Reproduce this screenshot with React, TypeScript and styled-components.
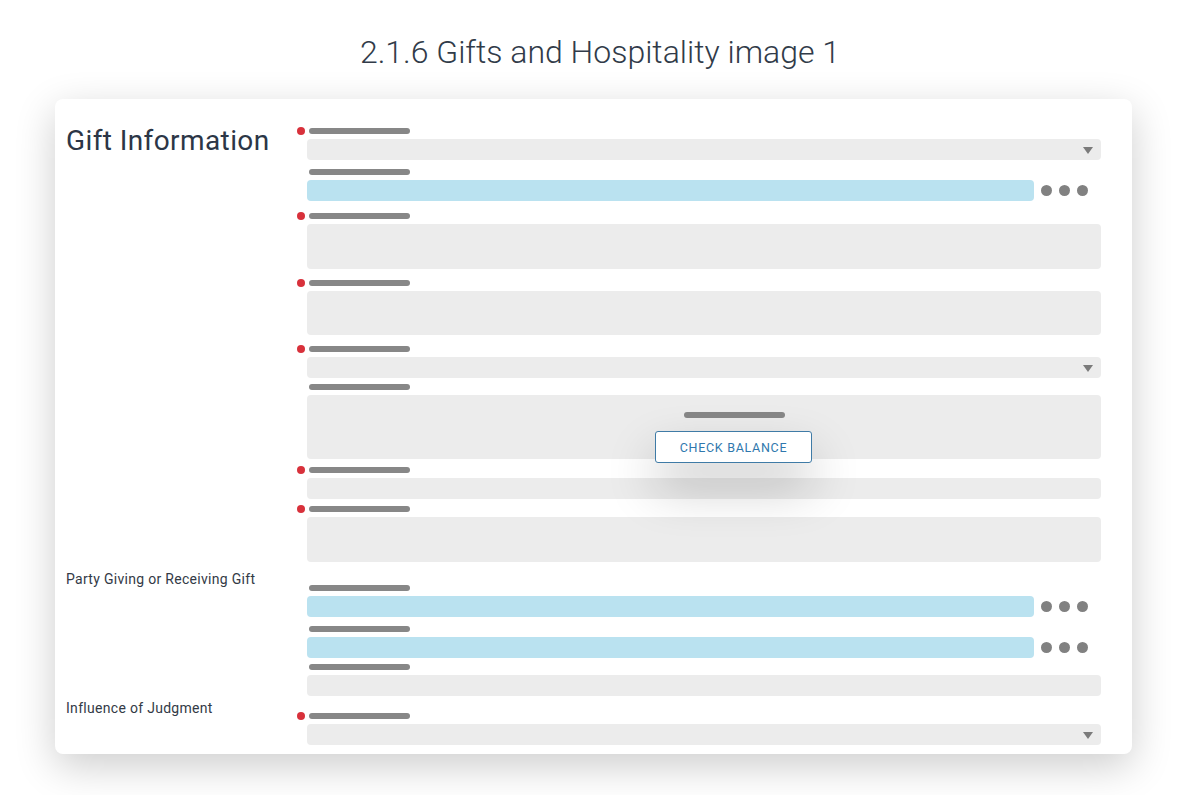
import React from 'react';
import styled, { createGlobalStyle } from 'styled-components';

type Kind = 'select' | 'blue' | 'plain';

interface FieldDef {
    kind: Kind;
    h: number;
    gap: number;
    required?: boolean;
    overlay?: boolean;
}

interface SectionDef {
    title: string;
    big?: boolean;
    top: number;
    offset: number;
    fields: Array<FieldDef>;
}

const GlobalStyle = createGlobalStyle`
    body {
        margin: 0;
        background: #ffffff;
        font-family: Roboto, "Liberation Sans", sans-serif;
    }
`

const Page = styled.div`
    width: 1200px;
    height: 795px;
    overflow: hidden;
`

const Title = styled.h1`
    margin: 0;
    padding-top: 33px;
    font-size: 32px;
    line-height: 38px;
    font-weight: 300;
    color: #313b49;
    text-align: center;
`

const Card = styled.div`
    margin: 28px 0 0 55px;
    width: 1077px;
    box-sizing: border-box;
    padding: 25px 31px 9px 11px;
    background: #ffffff;
    border-radius: 8px;
    box-shadow: 0 12px 40px rgba(0, 0, 0, 0.2);
`

const Section = styled.div<{ $top: number }>`
    display: grid;
    grid-template-columns: 241px 1fr;
    align-items: start;
    margin-top: ${p => p.$top}px;
`

const Heading = styled.div<{ $big?: boolean }>`
    font-size: ${p => (p.$big ? '28px' : '14px')};
    line-height: ${p => (p.$big ? '33px' : '16px')};
    letter-spacing: ${p => (p.$big ? '0.4px' : '0.3px')};
    font-weight: 400;
    color: ${p => (p.$big ? '#2c3646' : '#333a46')};
`

const Fields = styled.div<{ $offset: number }>`
    display: flex;
    flex-direction: column;
    padding-top: ${p => p.$offset}px;
`

const Field = styled.div<{ $gap: number }>`
    display: flex;
    flex-direction: column;
    gap: 5px;
    margin-top: ${p => p.$gap}px;
`

const LabelRow = styled.div`
    position: relative;
    height: 6px;
`

const LabelBar = styled.div`
    margin-left: 2px;
    width: 101px;
    height: 6px;
    border-radius: 3px;
    background: #878787;
`

const RequiredDot = styled.span`
    position: absolute;
    left: -10px;
    top: -1px;
    width: 8px;
    height: 8px;
    border-radius: 50%;
    background: #d8313b;
`

const InputRow = styled.div`
    display: flex;
    align-items: center;
`

const Box = styled.div<{ $h: number; $blue?: boolean }>`
    position: relative;
    flex: 1;
    height: ${p => p.$h}px;
    border-radius: 4px;
    background: ${p => (p.$blue ? '#bae2f0' : '#ececec')};
`

const Arrow = styled.span`
    position: absolute;
    right: 8px;
    top: 50%;
    margin-top: -3px;
    width: 0;
    height: 0;
    border-left: 5px solid transparent;
    border-right: 5px solid transparent;
    border-top: 7px solid #7b7b7b;
`

const Dots = styled.div`
    display: flex;
    gap: 7px;
    width: 67px;
    box-sizing: border-box;
    padding-left: 7px;
`

const Dot = styled.span`
    width: 11px;
    height: 11px;
    border-radius: 50%;
    background: #818181;
`

const Overlay = styled.div`
    position: absolute;
    left: 348px;
    top: 17px;
    display: flex;
    flex-direction: column;
    align-items: center;
    gap: 13px;
    z-index: 2;
`

const CheckButton = styled.button`
    width: 157px;
    height: 32px;
    padding: 0;
    background: #ffffff;
    border: 1px solid #3f7ba6;
    border-radius: 3px;
    font-family: Roboto, "Liberation Sans", sans-serif;
    font-size: 12.5px;
    letter-spacing: 0.7px;
    color: #2f78ad;
    box-shadow: 0 24px 50px rgba(0, 0, 0, 0.24);
`

const sections: Array<SectionDef> = [
    {
        title: 'Gift Information',
        big: true,
        top: 0,
        offset: 4,
        fields: [
            { kind: 'select', h: 21, gap: 0, required: true },
            { kind: 'blue', h: 21, gap: 9 },
            { kind: 'plain', h: 45, gap: 12, required: true },
            { kind: 'plain', h: 44, gap: 11, required: true },
            { kind: 'select', h: 21, gap: 11, required: true },
            { kind: 'plain', h: 64, gap: 6, overlay: true },
            { kind: 'plain', h: 21, gap: 8, required: true },
            { kind: 'plain', h: 45, gap: 7, required: true },
        ],
    },
    {
        title: 'Party Giving or Receiving Gift',
        top: 9,
        offset: 14,
        fields: [
            { kind: 'blue', h: 21, gap: 0 },
            { kind: 'blue', h: 21, gap: 9 },
            { kind: 'plain', h: 21, gap: 6 },
        ],
    },
    {
        title: 'Influence of Judgment',
        top: 4,
        offset: 13,
        fields: [
            { kind: 'select', h: 21, gap: 0, required: true },
        ],
    },
];

const FormField = ({ kind, h, gap, required, overlay }: FieldDef) => (
    <Field $gap={gap}>
        <LabelRow>
            {required && <RequiredDot />}
            <LabelBar />
        </LabelRow>
        <InputRow>
            <Box $h={h} $blue={kind === 'blue'}>
                {kind === 'select' && <Arrow />}
                {overlay && (
                    <Overlay>
                        <LabelBar />
                        <CheckButton>CHECK BALANCE</CheckButton>
                    </Overlay>
                )}
            </Box>
            {kind === 'blue' && (
                <Dots>
                    <Dot />
                    <Dot />
                    <Dot />
                </Dots>
            )}
        </InputRow>
    </Field>
);

const App = () => (
    <Page>
        <GlobalStyle />
        <Title>2.1.6 Gifts and Hospitality image 1</Title>
        <Card>
            {sections.map((s) => (
                <Section key={s.title} $top={s.top}>
                    <Heading $big={s.big}>{s.title}</Heading>
                    <Fields $offset={s.offset}>
                        {s.fields.map((f, i) => (
                            <FormField key={i} {...f} />
                        ))}
                    </Fields>
                </Section>
            ))}
        </Card>
    </Page>
);

export default App;
